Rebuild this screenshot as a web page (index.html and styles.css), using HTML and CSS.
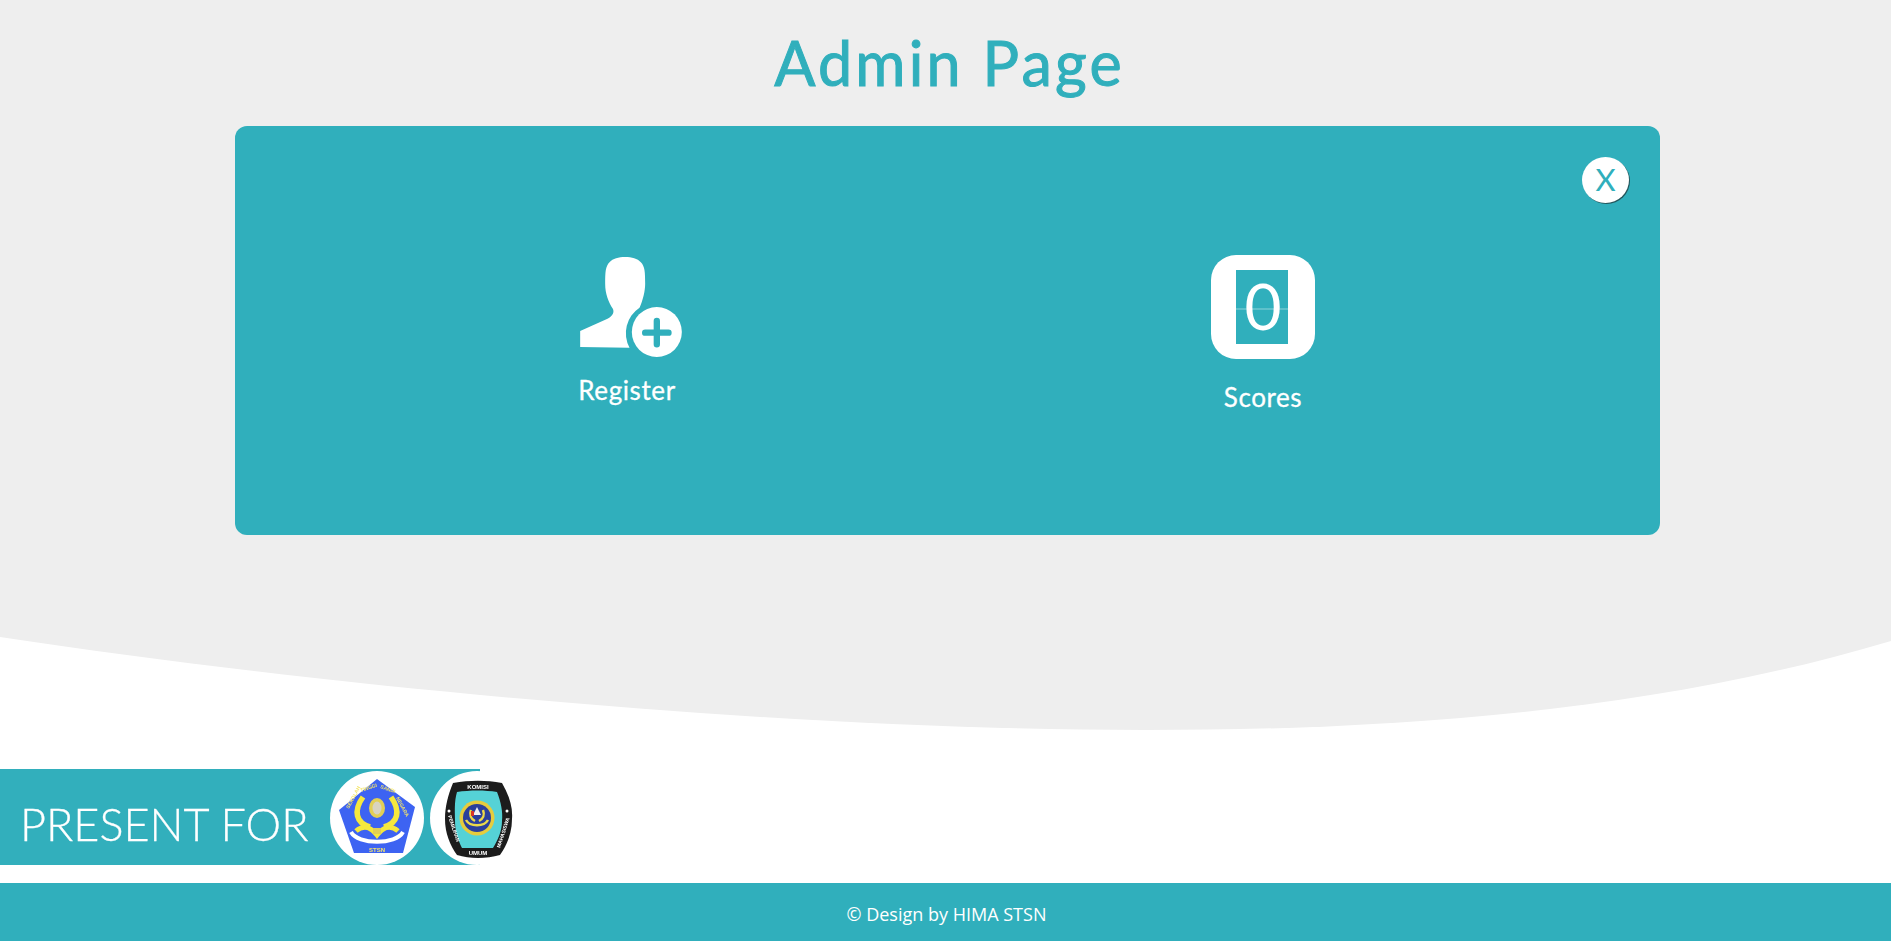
FILE: index.html
```html
<!DOCTYPE html>
<html lang="en">
<head>
    <meta charset="UTF-8">
    <meta name="viewport" content="width=device-width, initial-scale=1.0">
    <title>Admin Page</title>
    <link rel="stylesheet" href="styles.css">
</head>
<body>

    <!-- Grey background with curved bottom -->
    <svg class="wave" viewBox="0 0 1891 941" width="1891" height="941">
        <path d="M0 0H1891V641C1640 716 1370 730 1146 730C800 730 350 690 0 637Z" fill="#eeeeee"/>
    </svg>

    <div class="page">
        <h1 class="title">Admin Page</h1>

        <div class="panel">
            <button class="close">X</button>

            <a class="menu menu-register" href="#">
                <svg class="icon-register" viewBox="90 50 305 300" width="102" height="100">
                    <path d="M165 130C165 95 166 78 178 66C188 54 205 50 225 50C245 50 262 54 272 66C284 78 285 95 285 130C285 152 278 180 268 202A92 92 0 0 0 238 322L90 320V272L172 235C188 227 193 215 188 205C175 185 165 160 165 130Z" fill="#ffffff"/>
                    <circle cx="320" cy="275" r="75" fill="#ffffff"/>
                    <path d="M320 242V312M285 277H355" stroke="#30afbc" stroke-width="19" stroke-linecap="round"/>
                </svg>
                <span class="menu-label">Register</span>
            </a>

            <a class="menu menu-scores" href="#">
                <svg class="icon-scores" viewBox="0 0 104 104" width="104" height="104">
                    <rect width="104" height="104" rx="25" fill="#ffffff"/>
                    <rect x="25" y="15" width="52" height="74" fill="#30afbc"/>
                    <text x="52" y="75" text-anchor="middle" class="zero">0</text>
                    <path d="M0 54H104" stroke="#ffffff" stroke-opacity="0.45" stroke-width="1"/>
                </svg>
                <span class="menu-label">Scores</span>
            </a>
        </div>

        <!-- Banner with both emblems -->
        <svg class="banner" viewBox="0 0 520 100" width="520" height="100">
            <defs>
                <filter id="soft" x="-5%" y="-5%" width="110%" height="110%"><feGaussianBlur stdDeviation="0.5"/></filter>
            </defs>
            <g filter="url(#soft)">
                <rect x="0" y="0" width="480" height="96" fill="#30afbc"/>
                <text x="20" y="72" class="present">PRESENT FOR</text>
                <circle cx="377" cy="49" r="47" fill="#ffffff"/>
                <circle cx="477" cy="49" r="47" fill="#ffffff"/>
            </g>

            <!-- left emblem -->
            <g filter="url(#soft)">
                <path d="M377 10L415 38L403 84H354L339 41Z" fill="#3d63f2"/>
                <text transform="translate(349 40) rotate(-62)" class="emblem-side emblem-yellow">SEKOLAH</text>
                <text transform="translate(361 23) rotate(-18)" class="emblem-side emblem-yellow">TINGGI</text>
                <text transform="translate(380 19) rotate(20)" class="emblem-side emblem-yellow">SANDI</text>
                <text transform="translate(396 29) rotate(62)" class="emblem-side emblem-yellow">NEGARA</text>
                <ellipse cx="377" cy="39" rx="8" ry="10" fill="#e2cf55"/>
                <ellipse cx="377" cy="39" rx="4.500" ry="6.500" fill="#d9d4c0"/>
                <path d="M363 28C353 42 356 54 370 58M391 28C401 42 398 54 384 58" fill="none" stroke="#f6e83c" stroke-width="5.500"/>
                <path d="M356 62C365 54 372 60 377 66C382 60 389 54 398 62" fill="none" stroke="#f6e83c" stroke-width="5"/>
                <path d="M351 63C358 76 396 76 403 63" fill="none" stroke="#ffffff" stroke-width="4"/>
                <rect x="373" y="59" width="8" height="6" fill="#e2cf55"/>
                <text x="377" y="83" text-anchor="middle" class="emblem-small emblem-yellow">STSN</text>
            </g>

            <!-- right emblem -->
            <g filter="url(#soft)">
                <path d="M453 14C470 11 486 11 502 14C509 26 513 38 512 50C512 64 507 76 500 86C486 90 470 90 457 86C450 76 445 64 445 50C445 38 448 26 453 14Z" fill="#1c1c1c"/>
                <path d="M457 23C470 21 485 21 497 23C501 33 503 43 502 52C502 62 498 71 493 79H462C458 71 455 62 455 52C455 43 454 33 457 23Z" fill="#55d2d6"/>
                <text x="478" y="19.500" text-anchor="middle" class="emblem-small emblem-white">KOMISI</text>
                <text x="478" y="85.500" text-anchor="middle" class="emblem-small emblem-white">UMUM</text>
                <text transform="translate(448 47) rotate(72)" class="emblem-side emblem-white">PEMILIHAN</text>
                <text transform="translate(500 79) rotate(-72)" class="emblem-side emblem-white">MAHASISWA</text>
                <circle cx="449" cy="42" r="1.500" fill="#ffffff"/>
                <circle cx="507" cy="42" r="1.500" fill="#ffffff"/>
                <circle cx="477" cy="49" r="17.500" fill="#e6cc3c"/>
                <circle cx="477" cy="49" r="14" fill="#2b3f9c"/>
                <path d="M466 51C470 58 484 58 488 51M471 41C469 46 471 50 475 52M483 41C485 46 483 50 479 52" fill="none" stroke="#ecd94a" stroke-width="2.500"/>
                <path d="M477 38L481 46H473Z" fill="#f2f2f2"/>
                <rect x="471" y="42" width="3" height="5" fill="#d8352c"/>
            </g>
        </svg>

        <div class="footer">© Design by HIMA STSN</div>
    </div>

</body>
</html>
```

FILE: styles.css
```css
html, body {
    margin: 0;
    height: 100%;
    background-color: #ffffff;
    overflow: hidden;
}
.wave {
    position: absolute;
    top: 0;
    left: 0;
    display: block;
}
.page {
    position: relative;
    height: 941px;
    display: flex;
    flex-direction: column;
}
.title {
    margin: 0;
    height: 126px;
    line-height: 126px;
    box-sizing: border-box;
    padding: 0 0 20px 8px;
    text-align: center;
    font-family: Lato, sans-serif;
    font-size: 61px;
    font-weight: 400;
    letter-spacing: 3.2px;
    -webkit-text-stroke: 1px #30afbc;
    color: #30afbc;
}
.panel {
    position: relative;
    width: 1425px;
    height: 409px;
    margin-left: 235px;
    box-sizing: border-box;
    padding: 0 79px 0 74px;
    display: grid;
    grid-template-columns: 1fr 1fr;
    background-color: #30afbc;
    border-radius: 12px;
}
.close {
    position: absolute;
    top: 31px;
    right: 31px;
    width: 47px;
    height: 46px;
    padding: 0 0 2px;
    border: none;
    border-radius: 50%;
    background-color: #ffffff;
    box-shadow: 1px 1px 0 #24565c;
    color: #30afbc;
    font-family: Lato, sans-serif;
    font-size: 31px;
    font-weight: 400;
    cursor: pointer;
}
.menu {
    display: flex;
    flex-direction: column;
    align-items: center;
    text-decoration: none;
    color: #ffffff;
}
.menu-register {
    padding-top: 131px;
}
.menu-scores {
    padding-top: 129px;
}
.icon-register {
    margin: 0 0 17px 8px;
}
.icon-scores {
    margin-bottom: 22px;
}
.menu-label {
    font-family: Lato, sans-serif;
    font-size: 26px;
    font-weight: 400;
    line-height: 32px;
    letter-spacing: 0.6px;
    -webkit-text-stroke: 0.3px #ffffff;
}
.zero {
    font-family: Lato, sans-serif;
    font-size: 64px;
    font-weight: 400;
    fill: #ffffff;
}
.banner {
    display: block;
    margin-top: 234px;
}
.present {
    font-family: Lato, sans-serif;
    font-size: 45px;
    font-weight: 300;
    stroke: #ffffff;
    stroke-width: 0.3px;
    fill: #ffffff;
}
.emblem-small {
    font-family: "Liberation Sans", sans-serif;
    font-size: 6px;
    font-weight: 700;
}
.emblem-side {
    font-family: "Liberation Sans", sans-serif;
    font-size: 5px;
    font-weight: 700;
}
.emblem-yellow {
    fill: #f4e56a;
}
.emblem-white {
    fill: #ffffff;
}
.footer {
    margin-top: auto;
    height: 58px;
    padding: 5px 0 0 2px;
    box-sizing: border-box;
    line-height: 53px;
    text-align: center;
    background-color: #30afbc;
    color: #ffffff;
    font-family: "Open Sans", sans-serif;
    font-size: 18px;
}
```
